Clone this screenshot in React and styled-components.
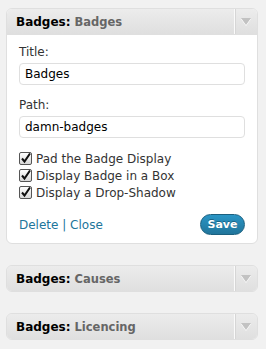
import styled, { createGlobalStyle } from "styled-components";

const GlobalStyle = createGlobalStyle`
  body {
    margin: 0;
    background: #f1f1f1;
    font-family: "DejaVu Sans", "Liberation Sans", sans-serif;
  }
`;

const Page = styled.div`
  padding: 8px 8px 0 6px;
  display: flex;
  flex-direction: column;
  gap: 21px;
`;

const Widget = styled.div`
  border: 1px solid #dfdfdf;
  border-radius: 6px;
  background: #fff;
  overflow: hidden;
`;

const Header = styled.div`
  display: flex;
  height: 25px;
  background: linear-gradient(#ececec, #dfdfdf);
  border-bottom: ${(p) => (p.$open ? "1px solid #dfdfdf" : "none")};
`;

const HeaderTitle = styled.div`
  flex: 1;
  display: flex;
  align-items: center;
  padding-left: 9px;
  font-size: 12px;
  font-weight: bold;
  color: #000;
  white-space: nowrap;
`;

const Sub = styled.span`
  color: #666;
  font-size: 11.5px;
  margin-left: 4px;
`;

const Toggle = styled.div`
  width: 22px;
  border-left: 1px solid #fafafa;
  box-shadow: inset 1px 0 0 #d6d6d6;
  display: flex;
  align-items: center;
  justify-content: center;
`;

const Arrow = styled.div`
  width: 0;
  height: 0;
  border-left: 5px solid transparent;
  border-right: 5px solid transparent;
  border-top: 7px solid #c2c2c2;
  filter: drop-shadow(0 1px 0 #fff);
`;

const Body = styled.div`
  padding: 9px 12px 8px 12px;
  font-size: 12px;
  color: #333;
`;

const Label = styled.div`
  line-height: 16px;
  margin-top: ${(p) => p.$top || 0}px;
`;

const Input = styled.div`
  margin-top: 3px;
  height: 20px;
  border: 1px solid #dfdfdf;
  border-radius: 4px;
  padding: 0 5px;
  display: flex;
  align-items: center;
  font-size: 12px;
  color: #000;
`;

const Checks = styled.div`
  margin-top: 12px;
  display: flex;
  flex-direction: column;
`;

const CheckRow = styled.label`
  display: flex;
  align-items: center;
  gap: 4px;
  height: 17px;
  color: #333;
`;

const Box = styled.span`
  width: 11px;
  height: 11px;
  border: 1px solid #555;
  border-radius: 2px;
  background: linear-gradient(#fff, #d8d8d8);
  display: flex;
  align-items: center;
  justify-content: center;
`;

const Footer = styled.div`
  margin-top: 13px;
  display: flex;
  align-items: center;
  justify-content: space-between;
`;

const Links = styled.div`
  color: #21759b;
  font-size: 12px;
`;

const SaveButton = styled.button`
  height: 21px;
  width: 45px;
  border: 1px solid #1b607f;
  border-radius: 11px;
  background: linear-gradient(#2a95c5, #21759b);
  color: #fff;
  font-family: inherit;
  font-weight: bold;
  font-size: 11px;
  padding: 0;
  text-shadow: 0 -1px 0 rgba(0, 0, 0, 0.3);
`;

function Check({ children }) {
  return (
    <CheckRow>
      <Box>
        <svg width="11" height="11" viewBox="0 0 11 11">
          <path d="M2 5.5 L4.5 8.5 L10 0.5" fill="none" stroke="#111" strokeWidth="2" />
        </svg>
      </Box>
      {children}
    </CheckRow>
  );
}

function WidgetHeader({ name, open }) {
  return (
    <Header $open={open}>
      <HeaderTitle>
        Badges:<Sub>{name}</Sub>
      </HeaderTitle>
      <Toggle>
        <Arrow />
      </Toggle>
    </Header>
  );
}

export default function App() {
  return (
    <Page>
      <GlobalStyle />
      <Widget>
        <WidgetHeader name="Badges" open />
        <Body>
          <Label>Title:</Label>
          <Input>Badges</Input>
          <Label $top={12}>Path:</Label>
          <Input>damn-badges</Input>
          <Checks>
            <Check>Pad the Badge Display</Check>
            <Check>Display Badge in a Box</Check>
            <Check>Display a Drop-Shadow</Check>
          </Checks>
          <Footer>
            <Links>Delete | Close</Links>
            <SaveButton>Save</SaveButton>
          </Footer>
        </Body>
      </Widget>
      <Widget>
        <WidgetHeader name="Causes" />
      </Widget>
      <Widget>
        <WidgetHeader name="Licencing" />
      </Widget>
    </Page>
  );
}
